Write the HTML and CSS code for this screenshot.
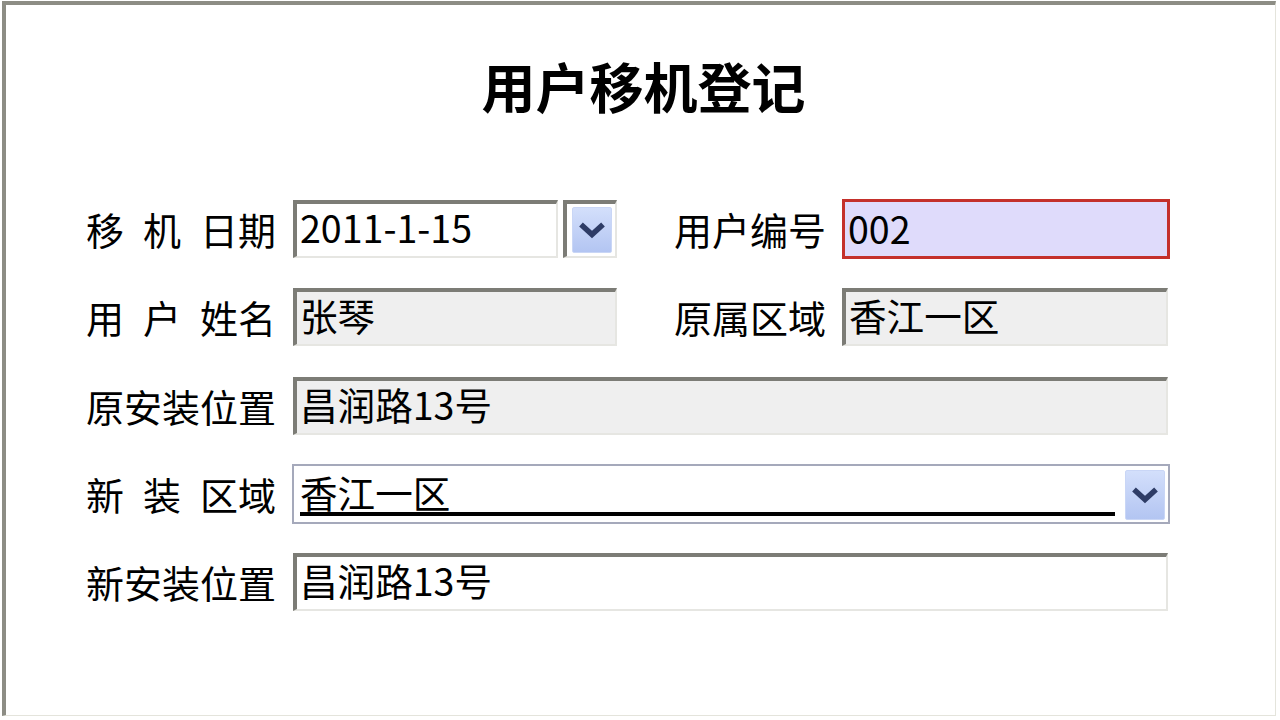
FILE: index.html
```html
<!DOCTYPE html>
<html lang="zh-CN">
<head>
<meta charset="utf-8">
<title>用户移机登记</title>
<link rel="stylesheet" href="styles.css">
</head>
<body>
<div class="frame">
  <h1 class="title">用户移机登记</h1>
  <div class="form">
    <div class="row">
      <div class="label">移<span class="sp"> </span>机<span class="sp"> </span>日期</div>
      <div class="field date">2011-1-15</div>
      <div class="dbox"><div class="btn"><svg width="28" height="18" viewBox="0 0 28 18"><path d="M3 3.5 L14 13.5 L25 3.5" fill="none" stroke="#2e3c66" stroke-width="5.5"/></svg></div></div>
      <div class="label label2">用户编号</div>
      <div class="field userid">002</div>
    </div>
    <div class="row">
      <div class="label">用<span class="sp"> </span>户<span class="sp"> </span>姓名</div>
      <div class="field ro half">张琴</div>
      <div class="label label2">原属区域</div>
      <div class="field ro half2">香江一区</div>
    </div>
    <div class="row">
      <div class="label">原安装位置</div>
      <div class="field ro full">昌润路13号</div>
    </div>
    <div class="row">
      <div class="label">新<span class="sp"> </span>装<span class="sp"> </span>区域</div>
      <div class="select">
        <div class="sel-text">香江一区</div>
        <div class="btn sel-btn"><svg width="28" height="18" viewBox="0 0 28 18"><path d="M3 3.5 L14 13.5 L25 3.5" fill="none" stroke="#2e3c66" stroke-width="5.5"/></svg></div>
      </div>
    </div>
    <div class="row">
      <div class="label">新安装位置</div>
      <div class="field full">昌润路13号</div>
    </div>
  </div>
</div>
</body>
</html>
```

FILE: styles.css
```css
html, body {
  margin: 0;
  padding: 0;
  background: #ffffff;
}
body {
  font-family: "Noto Sans CJK SC", "Noto Sans", sans-serif;
  color: #000;
}
.frame {
  margin: 1px 0 0 2px;
  width: 1269px;
  height: 710px;
  border-top: 4px solid #8d8d85;
  border-left: 4px solid #8d8d85;
  border-right: 1px solid #e4e4dc;
  border-bottom: 1px solid #e4e4dc;
  background: #fff;
}
.title {
  margin: 54px 0 0 0;
  padding-left: 6px;
  text-align: center;
  font-size: 54px;
  line-height: 54px;
  font-weight: bold;
}
.form {
  margin-top: 87px;
  padding-left: 80px;
}
.row {
  display: flex;
  align-items: center;
  height: 58px;
  margin-bottom: 30.3px;
}
.label {
  width: 190px;
  margin-right: 17px;
  font-size: 38px;
  line-height: 1;
  white-space: nowrap;
}
.sp {
  display: inline-block;
  width: 0.5em;
}
.label2 {
  width: 150px;
  margin-left: 57px;
  margin-right: 18px;
}
.field {
  box-sizing: border-box;
  height: 58px;
  border-top: 4px solid #7c7c76;
  border-left: 4px solid #7c7c76;
  border-right: 2px solid #e6e6e2;
  border-bottom: 2px solid #e6e6e2;
  background: #fff;
  padding-left: 3px;
  font-size: 37.6px;
  line-height: 45px;
  white-space: nowrap;
}
.ro {
  background: #efefef;
}
.date {
  width: 265px;
}
.dbox {
  box-sizing: border-box;
  width: 54px;
  height: 58px;
  margin-left: 5px;
  border-top: 4px solid #7c7c76;
  border-left: 4px solid #7c7c76;
  border-right: 2px solid #e6e6e2;
  border-bottom: 2px solid #e6e6e2;
  background: #fff;
  display: flex;
  align-items: center;
  padding-left: 5px;
}
.btn {
  box-sizing: border-box;
  width: 40px;
  height: 46px;
  border: 1px solid #c9d6f6;
  border-radius: 2px;
  background: linear-gradient(#d3dffb, #b3c5f2);
  display: flex;
  align-items: center;
  justify-content: center;
}
.userid {
  width: 328px;
  height: 60px;
  border: 3px solid #c4302b;
  background: #dfdbfb;
  padding-left: 3px;
  line-height: 52px;
}
.half {
  width: 324px;
}
.half2 {
  width: 326px;
}
.full {
  width: 875px;
}
.select {
  box-sizing: border-box;
  width: 878px;
  height: 60px;
  margin-left: -1px;
  border: 2px solid #a5a9bb;
  background: #fff;
  display: flex;
  align-items: flex-start;
}
.sel-text {
  flex: 1;
  margin: 6px 10px 0 6px;
  font-size: 37.6px;
  line-height: 40px;
  border-bottom: 4px solid #000;
  white-space: nowrap;
}
.sel-btn {
  height: 50px;
  margin: 4px 3px 0 0;
}
```
